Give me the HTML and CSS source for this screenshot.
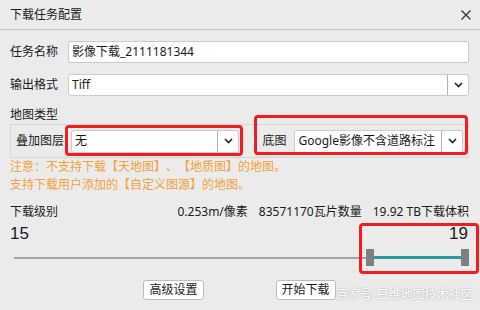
FILE: index.html
```html
<!DOCTYPE html>
<html lang="zh-CN">
<head>
    <meta charset="UTF-8">
    <title>下载任务配置</title>
    <link rel="stylesheet" href="styles.css">
</head>
<body>
    <div class="dialog">
        <header class="titlebar">
            <span class="title">下载任务配置</span>
            <svg class="close" width="10" height="10" viewBox="0 0 10 10">
                <path d="M0.5 0.5 L9.5 9.5 M9.5 0.5 L0.5 9.5" stroke="#333" stroke-width="1.3" fill="none"/>
            </svg>
        </header>

        <main class="content">
            <div class="form-row">
                <label class="row-label">任务名称</label>
                <div class="input">影像下载_2111181344</div>
            </div>

            <div class="form-row">
                <label class="row-label">输出格式</label>
                <div class="select wide">
                    <span class="select-value">Tiff</span>
                    <span class="select-arrow">
                        <svg width="9" height="6" viewBox="0 0 9 6"><path d="M1 1 L4.5 4.5 L8 1" stroke="#222" stroke-width="1.6" fill="none"/></svg>
                    </span>
                </div>
            </div>

            <div class="section-title">地图类型</div>
            <div class="group">
                <span class="group-label">叠加图层</span>
                <div class="select small">
                    <span class="select-value">无</span>
                    <span class="select-arrow">
                        <svg width="9" height="6" viewBox="0 0 9 6"><path d="M1 1 L4.5 4.5 L8 1" stroke="#222" stroke-width="1.6" fill="none"/></svg>
                    </span>
                </div>
                <span class="group-label base-label">底图</span>
                <div class="select small">
                    <span class="select-value">Google影像不含道路标注</span>
                    <span class="select-arrow">
                        <svg width="9" height="6" viewBox="0 0 9 6"><path d="M1 1 L4.5 4.5 L8 1" stroke="#222" stroke-width="1.6" fill="none"/></svg>
                    </span>
                </div>
            </div>

            <p class="notice">注意：不支持下载【天地图】、【地质图】的地图。<br>支持下载用户添加的【自定义图源】的地图。</p>

            <div class="stats">
                <span class="stats-label">下载级别</span>
                <span class="stat">0.253m/像素</span>
                <span class="stat">83571170瓦片数量</span>
                <span class="stat">19.92 TB下载体积</span>
            </div>

            <div class="levels">
                <span>15</span>
                <span>19</span>
            </div>

            <div class="slider">
                <div class="track"></div>
                <div class="handle"></div>
                <div class="track active"></div>
                <div class="handle"></div>
            </div>

            <div class="actions">
                <button class="btn">高级设置</button>
                <button class="btn">开始下载</button>
            </div>
        </main>

        <div class="mark mark-overlay"></div>
        <div class="mark mark-base"></div>
        <div class="mark mark-level"></div>
        <div class="watermark">百家号/三维地图技术社区</div>
    </div>
</body>
</html>
```

FILE: styles.css
```css
body {
    margin: 0;
    padding: 0;
    background-color: #ebebeb;
    font-family: "Noto Sans", "Noto Sans CJK SC", sans-serif;
    font-size: 12px;
    color: #1a1a1a;
    text-spacing-trim: space-all;
}

.dialog {
    position: relative;
    width: 480px;
    height: 310px;
    overflow: hidden;
}

.titlebar {
    height: 29px;
    display: flex;
    align-items: center;
    justify-content: space-between;
    padding: 0 9px 0 10px;
    border-bottom: 1px solid #c6c6c6;
}

.title {
    line-height: 16px;
}

.content {
    padding: 11px 11px 0 10px;
}

.form-row {
    display: flex;
    align-items: center;
    margin-bottom: 11px;
}

.row-label {
    width: 58px;
    line-height: 16px;
}

.input {
    flex: 1;
    height: 20px;
    line-height: 20px;
    padding-left: 3px;
    background: #fff;
    border: 1px solid #cbcbcb;
    border-radius: 2px;
}

.select {
    display: flex;
    height: 20px;
    background: #fff;
    border: 1px solid #cbcbcb;
    border-radius: 3px;
}

.select.wide {
    flex: 1;
}

.select.small {
    width: 167px;
    height: 21px;
}

.select-value {
    flex: 1;
    padding-left: 3px;
    line-height: 20px;
    white-space: nowrap;
    overflow: hidden;
}

.select-arrow {
    width: 20px;
    display: flex;
    align-items: center;
    justify-content: center;
    border-left: 1px solid #b4b4b4;
}

.section-title {
    line-height: 16px;
    margin-bottom: 1px;
}

.group {
    display: flex;
    align-items: center;
    height: 32px;
    padding: 0 5px;
    border: 1px solid #d6d6d6;
}

.group-label {
    width: 55px;
    line-height: 16px;
}

.base-label {
    width: 32px;
    margin-left: 23px;
}

.notice {
    margin: 0;
    color: #f2a23a;
    line-height: 18px;
}

.stats {
    display: flex;
    margin-top: 10px;
    line-height: 16px;
}

.stats-label {
    flex: 1;
}

.stat {
    margin-left: 11px;
    white-space: nowrap;
}

.levels {
    display: flex;
    justify-content: space-between;
    padding-right: 1px;
    margin-top: 4px;
    font-family: "Liberation Sans", sans-serif;
    font-size: 17px;
    line-height: 20px;
}

.slider {
    display: flex;
    align-items: center;
    height: 17px;
    margin: 5px 0 0 4px;
}

.track {
    flex: 1;
    height: 2px;
    background: #a3a3a3;
}

.track.active {
    flex: none;
    width: 87px;
    height: 3px;
    background: #2f9a9a;
}

.handle {
    width: 8px;
    height: 17px;
    background: #808080;
}

.actions {
    display: flex;
    justify-content: center;
    gap: 72px;
    margin-top: 14px;
}

.btn {
    font-family: inherit;
    font-size: 12px;
    line-height: 16px;
    padding: 1px 5px;
    background: #fff;
    color: #1a1a1a;
    border: 1px solid #bcbcbc;
    border-radius: 3px;
}

.mark {
    position: absolute;
    border: 3px solid #f41c1c;
    border-radius: 4px;
    box-sizing: border-box;
}

.mark-overlay {
    left: 65px;
    top: 125px;
    width: 178px;
    height: 31px;
}

.mark-base {
    left: 254px;
    top: 115px;
    width: 214px;
    height: 40px;
}

.mark-level {
    left: 359px;
    top: 223px;
    width: 120px;
    height: 51px;
}

.watermark {
    position: absolute;
    left: 336px;
    top: 287px;
    color: #fff;
    text-shadow: 0 0 2px rgba(0, 0, 0, 0.35);
    line-height: 16px;
}
```
